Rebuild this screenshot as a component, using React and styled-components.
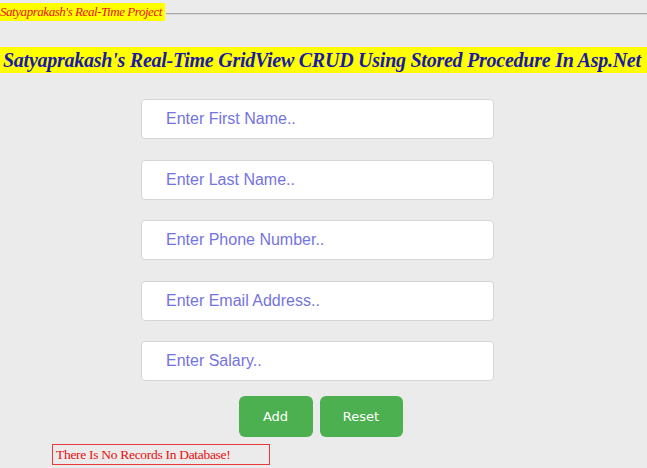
import React from 'react'
import styled, { createGlobalStyle } from 'styled-components'

const GlobalStyle = createGlobalStyle`
  html, body {
    margin: 0;
    padding: 0;
    background: #ebebeb;
  }
  * { box-sizing: border-box; }
`

const Page = styled.div`
  width: 647px;
  height: 468px;
  overflow: hidden;
  padding-top: 3px;
`

const Legend = styled.div`
  display: flex;
  align-items: center;
  height: 18px;
`

const LegendText = styled.span`
  background: #ffff00;
  color: #e8101a;
  font-family: "Liberation Serif", serif;
  font-style: italic;
  font-size: 13px;
  letter-spacing: -0.45px;
  line-height: 18px;
  padding-right: 3px;
  white-space: nowrap;
`

const Rule = styled.div`
  flex: 1;
  height: 2px;
  margin-top: 4px;
  margin-left: 1px;
  background: #aaaaaa;
  border-bottom: 1px solid #d8d8d8;
`

const Title = styled.h2`
  margin: 26px 0 0;
  height: 26px;
  background: #ffff00;
  color: #1a1aa8;
  font-family: "Liberation Serif", serif;
  font-style: italic;
  font-weight: bold;
  font-size: 20px;
  letter-spacing: -0.25px;
  line-height: 27px;
  padding-left: 3px;
  white-space: nowrap;
  overflow: hidden;
`

const Form = styled.div`
  display: flex;
  flex-direction: column;
  align-items: center;
  gap: 20.5px;
  margin-top: 26px;
  padding-right: 12px;
`

const Field = styled.input`
  width: 353px;
  height: 40px;
  border: 1px solid #d6d6d6;
  border-radius: 4px;
  background: #fff;
  padding: 0 24px;
  font-family: "Liberation Sans", Arial, sans-serif;
  font-size: 16px;
  outline: none;
  &::placeholder {
    color: #7474e0;
  }
`

const Buttons = styled.div`
  display: flex;
  gap: 7px;
  justify-content: center;
  margin-top: 15px;
  padding-right: 6px;
`

const Button = styled.button`
  width: ${p => p.$w}px;
  height: 41px;
  border: none;
  border-radius: 6px;
  background: #4caf50;
  color: #fff;
  font-family: "DejaVu Sans", Verdana, sans-serif;
  font-size: 13px;
  cursor: pointer;
`

const Message = styled.div`
  margin: 7px 0 0 52px;
  width: 218px;
  height: 21px;
  border: 1px solid #e83a3a;
  color: #e81010;
  font-family: "Liberation Serif", serif;
  font-size: 13.5px;
  letter-spacing: -0.3px;
  line-height: 19px;
  padding-left: 3px;
`

const fields = [
  'Enter First Name..',
  'Enter Last Name..',
  'Enter Phone Number..',
  'Enter Email Address..',
  'Enter Salary..',
]

export default function App() {
  return (
    <>
      <GlobalStyle />
      <Page>
        <Legend>
          <LegendText>Satyaprakash's Real-Time Project</LegendText>
          <Rule />
        </Legend>
        <Title>Satyaprakash's Real-Time GridView CRUD Using Stored Procedure In Asp.Net</Title>
        <Form>
          {fields.map(f => (
            <Field key={f} placeholder={f} />
          ))}
        </Form>
        <Buttons>
          <Button $w={74}>Add</Button>
          <Button $w={83}>Reset</Button>
        </Buttons>
        <Message>There Is No Records In Database!</Message>
      </Page>
    </>
  )
}
